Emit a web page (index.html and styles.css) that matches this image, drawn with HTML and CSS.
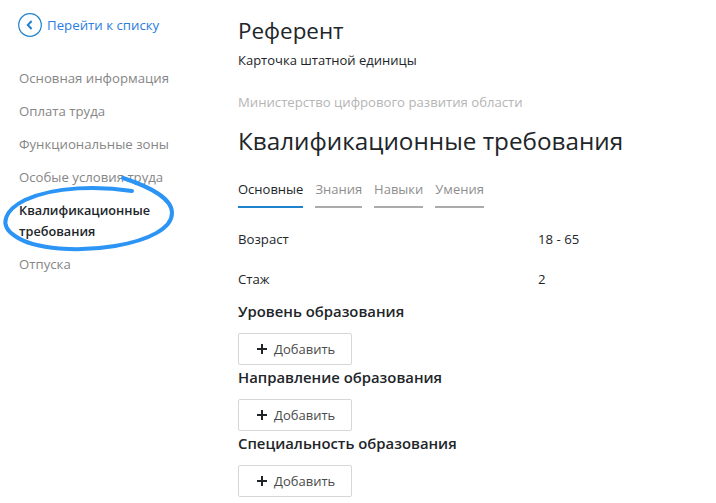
FILE: index.html
```html
<!DOCTYPE html>
<html lang="en">
<head>
  <meta charset="UTF-8">
  <meta name="viewport" content="width=device-width, initial-scale=1.0">
  <title>Референт</title>
  <link rel="stylesheet" href="styles.css">
</head>
<body>
  <div class="page">
    <div class="sidebar">
      <a class="back-link" href="#">
        <svg class="back-icon" width="24" height="24" viewBox="0 0 24 24">
          <circle cx="12" cy="12" r="11.3" fill="none" stroke="#1e82cc" stroke-width="1.2"/>
          <path d="M13.6 8 L9.8 12 L13.6 16" fill="none" stroke="#1e82cc" stroke-width="2"/>
        </svg>
        <span>Перейти к списку</span>
      </a>
      <ul class="side-nav">
        <li>Основная информация</li>
        <li>Оплата труда</li>
        <li>Функциональные зоны</li>
        <li>Особые условия труда</li>
        <li class="active">Квалификационные требования</li>
        <li>Отпуска</li>
      </ul>
    </div>

    <div class="content">
      <h2 class="title">Референт</h2>
      <div class="subtitle">Карточка штатной единицы</div>
      <div class="org">Министерство цифрового развития области</div>
      <h1 class="section-title">Квалификационные требования</h1>

      <div class="tabs">
        <div class="tab active">Основные</div>
        <div class="tab">Знания</div>
        <div class="tab">Навыки</div>
        <div class="tab">Умения</div>
      </div>

      <div class="field"><span class="field-name">Возраст</span><span>18 - 65</span></div>
      <div class="field"><span class="field-name">Стаж</span><span>2</span></div>

      <h3 class="group-title first">Уровень образования</h3>
      <button class="add-btn">
        <svg class="plus" width="10" height="10" viewBox="0 0 10 10"><path d="M0 5H10M5 0V10" stroke="#212529" stroke-width="2"/></svg>
        Добавить
      </button>
      <h3 class="group-title">Направление образования</h3>
      <button class="add-btn">
        <svg class="plus" width="10" height="10" viewBox="0 0 10 10"><path d="M0 5H10M5 0V10" stroke="#212529" stroke-width="2"/></svg>
        Добавить
      </button>
      <h3 class="group-title">Специальность образования</h3>
      <button class="add-btn">
        <svg class="plus" width="10" height="10" viewBox="0 0 10 10"><path d="M0 5H10M5 0V10" stroke="#212529" stroke-width="2"/></svg>
        Добавить
      </button>
    </div>
  </div>

  <!-- hand drawn circle over the active menu item -->
  <svg class="scribble" width="180" height="90" viewBox="0 170 180 90">
    <path d="M132 191 C100 186 55 186 25 200 C5 210 -2 225 15 236 C35 250 80 252 115 246 C150 240 172 228 172 213 C172 198 150 187 123 178" fill="none" stroke="#2b94f4" stroke-width="4" stroke-linecap="round"/>
  </svg>
</body>
</html>
```

FILE: styles.css
```css
body {
  margin: 0;
  padding: 0;
  background: #fff;
  font-family: 'Open Sans', 'Noto Sans', sans-serif;
  color: #212529;
  height: 503px;
  overflow: hidden;
}

.page {
  display: flex;
}

.sidebar {
  width: 238px;
  flex-shrink: 0;
  box-sizing: border-box;
  padding: 13px 0 0 19px;
}

.back-link {
  display: flex;
  align-items: center;
  gap: 5px;
  margin-left: -1px;
  color: #2b7de0;
  text-decoration: none;
  font-size: 13.25px;
}

.side-nav {
  list-style: none;
  margin: 31px 0 0;
  padding: 0;
  width: 152px;
  font-size: 13.2px;
  line-height: 21px;
  color: #868686;
}

.side-nav li {
  margin-bottom: 12px;
}

.side-nav .active {
  color: #212529;
  font-size: 12.7px;
  font-weight: 600;
}

.content {
  flex: 1;
  padding-top: 16px;
}

.title {
  margin: 0;
  font-size: 22.4px;
  line-height: 30px;
  font-weight: 400;
}

.subtitle {
  margin-top: 6px;
  font-size: 13px;
  line-height: 17px;
}

.org {
  margin-top: 25px;
  font-size: 13.15px;
  line-height: 17px;
  color: #b5b5b5;
}

.section-title {
  margin: 13px 0 0;
  font-size: 24.25px;
  line-height: 34px;
  font-weight: 400;
}

.tabs {
  display: flex;
  gap: 12px;
  margin-top: 22px;
}

.tab {
  font-size: 13px;
  line-height: 18px;
  padding-bottom: 8px;
  color: #8e8e8e;
  border-bottom: 2px solid #ababab;
}

.tab.active {
  color: #212529;
  border-bottom-color: #1e82cc;
}

.field {
  display: flex;
  font-size: 13.2px;
  line-height: 17px;
  margin-top: 23px;
}

.field-name {
  width: 300px;
}

.group-title {
  margin: 2px 0 12px;
  font-size: 14.85px;
  line-height: 20px;
  font-weight: 600;
}

.group-title.first {
  margin-top: 13px;
}

.add-btn {
  display: flex;
  align-items: center;
  gap: 7px;
  width: 114px;
  height: 32px;
  padding: 0 0 0 18px;
  background: #fff;
  border: 1px solid #d6d6d6;
  border-radius: 2px;
  color: #4a4a4a;
  font-family: inherit;
  font-size: 13px;
}

.plus {
  flex-shrink: 0;
}

.scribble {
  position: absolute;
  left: 0;
  top: 170px;
}
```
